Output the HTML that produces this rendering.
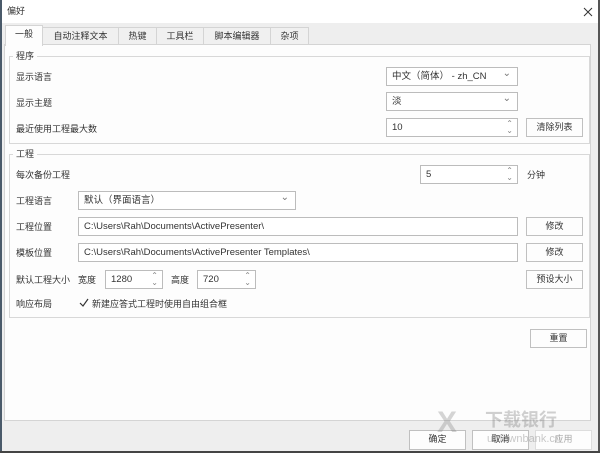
<!DOCTYPE html>
<html><head><meta charset="utf-8"><style>
*{margin:0;padding:0;box-sizing:border-box}
body{width:600px;height:453px;overflow:hidden;background:#fff;font-family:"Liberation Sans","Noto Sans CJK SC",sans-serif;font-size:9px;color:#333;position:relative}
.a{position:absolute}
.t{position:absolute;line-height:12px;white-space:nowrap}
.inp{position:absolute;border:1px solid #bcbcbc;background:#fff;padding-left:5px;line-height:17px;white-space:nowrap;font-size:9.5px}
.btn{position:absolute;border:1px solid #c0c0c0;background:#fdfdfd;text-align:center;line-height:17px;font-size:9px}
.dd::after{content:"⌄";position:absolute;right:6px;top:-3px;color:#777;font-size:10px}
.sp::after{content:"⌃\A⌄";white-space:pre;position:absolute;right:4px;top:1px;color:#888;font-size:8px;line-height:7px}
.grp{position:absolute;border:1px solid #d8d8d8}
.gt{position:absolute;background:#fdfdfd;padding:0 3px;line-height:12px}
.tab{position:absolute;top:27px;height:18px;border:1px solid #d4d4d4;border-bottom:none;background:#f0f0f0;text-align:center;line-height:17px}
</style></head><body>
<div class="a" style="left:0;top:0;width:2px;height:453px;background:#4a5a6a"></div>
<div class="a" style="right:0;top:0;width:2px;height:453px;background:#555"></div>
<div class="a" style="left:0;top:451px;width:600px;height:2px;background:#444"></div>
<div class="t" style="left:7px;top:5px">偏好</div>
<svg class="a" style="left:583px;top:7px" width="10" height="10"><path d="M1 1L9 9M9 1L1 9" stroke="#333" stroke-width="1"/></svg>
<div class="a" style="left:2px;top:23px;width:596px;height:428px;background:#eeeeee"></div>
<div class="tab" style="left:42px;width:77px">自动注释文本</div>
<div class="tab" style="left:118px;width:39px">热键</div>
<div class="tab" style="left:156px;width:48px">工具栏</div>
<div class="tab" style="left:203px;width:68px">脚本编辑器</div>
<div class="tab" style="left:270px;width:39px">杂项</div>
<div class="a" style="left:4px;top:44px;width:587px;height:377px;background:#fdfdfd;border:1px solid #d4d4d4"></div>
<div class="tab" style="left:5px;top:25px;width:38px;height:21px;background:#fdfdfd;border-color:#d4d4d4">一般</div>

<div class="grp" style="left:9px;top:56px;width:581px;height:88px"></div>
<div class="gt" style="left:13px;top:50px">程序</div>
<div class="t" style="left:16px;top:71px">显示语言</div>
<div class="inp dd" style="left:386px;top:67px;width:132px;height:19px">中文（简体） - zh_CN</div>
<div class="t" style="left:16px;top:97px">显示主题</div>
<div class="inp dd" style="left:386px;top:92px;width:132px;height:19px">淡</div>
<div class="t" style="left:16px;top:123px">最近使用工程最大数</div>
<div class="inp sp" style="left:386px;top:118px;width:132px;height:19px">10</div>
<div class="btn" style="left:526px;top:118px;width:57px;height:19px">清除列表</div>

<div class="grp" style="left:9px;top:154px;width:581px;height:164px"></div>
<div class="gt" style="left:13px;top:148px">工程</div>
<div class="t" style="left:16px;top:169px">每次备份工程</div>
<div class="inp sp" style="left:420px;top:165px;width:98px;height:19px">5</div>
<div class="t" style="left:527px;top:169px">分钟</div>
<div class="t" style="left:16px;top:195px">工程语言</div>
<div class="inp dd" style="left:78px;top:191px;width:218px;height:19px">默认（界面语言）</div>
<div class="t" style="left:16px;top:221px">工程位置</div>
<div class="inp" style="left:78px;top:217px;width:440px;height:19px">C:\Users\Rah\Documents\ActivePresenter\</div>
<div class="btn" style="left:526px;top:217px;width:57px;height:19px">修改</div>
<div class="t" style="left:16px;top:247px">模板位置</div>
<div class="inp" style="left:78px;top:243px;width:440px;height:19px">C:\Users\Rah\Documents\ActivePresenter Templates\</div>
<div class="btn" style="left:526px;top:243px;width:57px;height:19px">修改</div>
<div class="t" style="left:16px;top:274px">默认工程大小</div>
<div class="t" style="left:78px;top:274px">宽度</div>
<div class="inp sp" style="left:105px;top:270px;width:58px;height:19px">1280</div>
<div class="t" style="left:171px;top:274px">高度</div>
<div class="inp sp" style="left:197px;top:270px;width:59px;height:19px">720</div>
<div class="btn" style="left:526px;top:270px;width:57px;height:19px">预设大小</div>
<div class="t" style="left:16px;top:298px">响应布局</div>
<svg class="a" style="left:79px;top:298px" width="10" height="10"><path d="M1 5L4 8L9 1" stroke="#333" fill="none" stroke-width="1.2"/></svg>
<div class="t" style="left:92px;top:298px">新建应答式工程时使用自由组合框</div>

<div class="btn" style="left:530px;top:329px;width:57px;height:19px">重置</div>

<div class="btn" style="left:409px;top:430px;width:57px;height:20px">确定</div>
<div class="btn" style="left:472px;top:430px;width:57px;height:20px">取消</div>
<div class="btn" style="left:535px;top:430px;width:57px;height:20px;color:#aaa;border-color:#ddd">应用</div>
<div class="t" style="left:485px;top:410px;font-size:18px;line-height:20px;color:rgba(120,120,120,0.35);font-weight:bold">下载银行</div>
<div class="t" style="left:487px;top:433px;font-size:11px;color:rgba(120,120,120,0.4)">u.downbank.cn</div>
<div class="t" style="left:437px;top:408px;font-size:30px;line-height:30px;color:rgba(120,120,120,0.3);font-weight:bold">X</div>
</body></html>
